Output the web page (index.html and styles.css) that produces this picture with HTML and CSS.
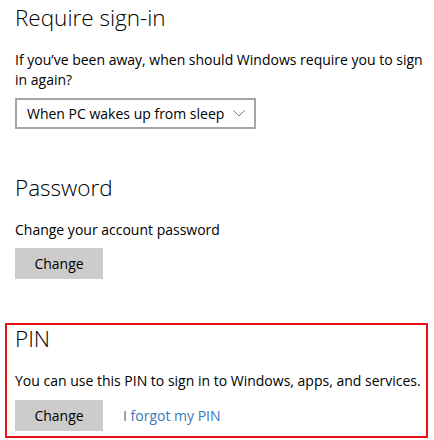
FILE: index.html
```html
<!DOCTYPE html>
<html lang="en">
<head>
    <meta charset="UTF-8">
    <meta name="viewport" content="width=device-width, initial-scale=1.0">
    <title>Sign-in options</title>
    <link rel="stylesheet" href="styles.css">
</head>
<body>
    <div class="section first">
        <h2>Require sign-in</h2>
        <p class="desc">If you’ve been away, when should Windows require you to sign in again?</p>
        <div class="dropdown">
            <span>When PC wakes up from sleep</span>
            <svg class="chevron" width="12" height="7" viewBox="0 0 12 7">
                <path d="M0.5 0.5 L6 6 L11.5 0.5" fill="none" stroke="#7a7a7a" stroke-width="1"/>
            </svg>
        </div>
    </div>

    <div class="section">
        <h2>Password</h2>
        <p class="desc">Change your account password</p>
        <button type="button">Change</button>
    </div>

    <div class="section pin">
        <h2>PIN</h2>
        <p class="desc">You can use this PIN to sign in to Windows, apps, and services.</p>
        <div class="actions">
            <button type="button">Change</button>
            <a href="#">I forgot my PIN</a>
        </div>
    </div>
</body>
</html>
```

FILE: styles.css
```css
* {
    margin: 0;
    padding: 0;
    box-sizing: border-box;
}

body {
    font-family: 'Open Sans', 'Noto Sans', sans-serif;
    font-size: 14px;
    color: #000000;
    background: #ffffff;
    width: 434px;
    height: 440px;
    overflow: hidden;
}

.section {
    padding-left: 15px;
    margin-top: 45px;
}

.section.first {
    margin-top: 4px;
}

h2 {
    font-size: 22.5px;
    font-weight: 300;
    line-height: 28px;
}

.desc {
    line-height: 20px;
    margin-top: 18px;
    margin-bottom: 8px;
}

.dropdown {
    display: flex;
    align-items: center;
    justify-content: space-between;
    width: 241px;
    height: 31px;
    border: 2px solid #a6a6a6;
    padding: 0 9px 0 10px;
    white-space: nowrap;
}

button {
    width: 88px;
    height: 31px;
    background: #cccccc;
    border: none;
    font-family: inherit;
    font-size: 14px;
    color: #000000;
}

.pin {
    margin: 44px 6px 0 5px;
    border: 2px solid #e81010;
    padding: 0 0 5px 8px;
}

.pin .desc {
    margin-bottom: 9px;
}

.actions {
    display: flex;
    align-items: center;
    gap: 20px;
}

.actions a {
    color: #3a78b8;
    text-decoration: none;
}
```
